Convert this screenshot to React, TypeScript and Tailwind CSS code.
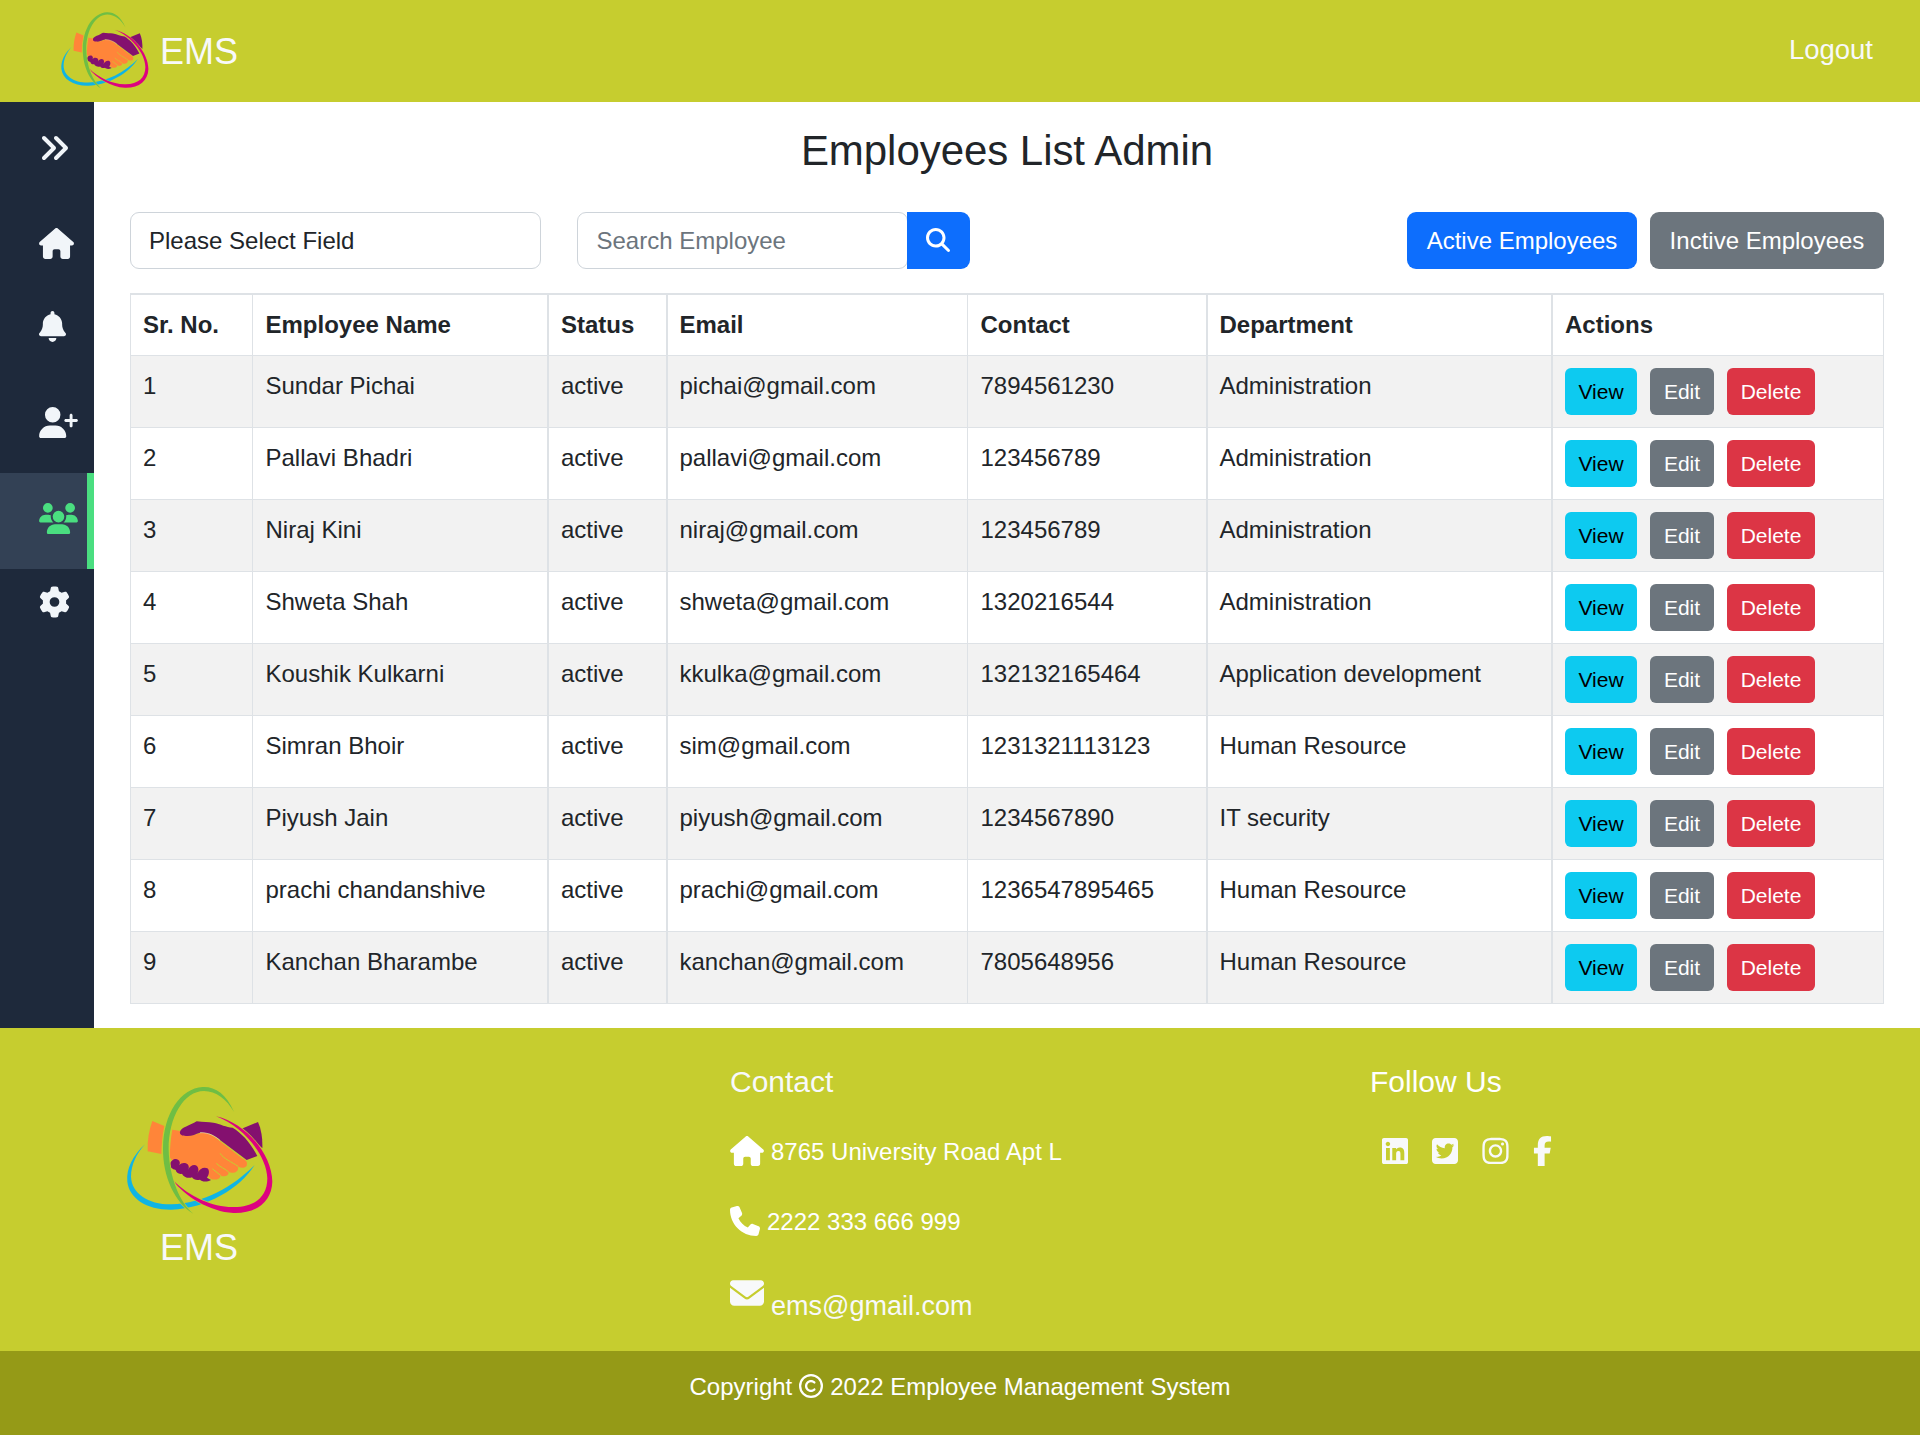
import React from "react";
import {
  FaAnglesRight,
  FaHouse,
  FaBell,
  FaUserPlus,
  FaUsers,
  FaGear,
  FaMagnifyingGlass,
  FaPhone,
  FaEnvelope,
  FaLinkedin,
  FaSquareTwitter,
  FaInstagram,
  FaFacebookF,
  FaRegCopyright,
} from "react-icons/fa6";

type Employee = {
  id: number;
  name: string;
  email: string;
  contact: string;
  department: string;
};

const employees: Employee[] = [
  { id: 1, name: "Sundar Pichai", email: "pichai@gmail.com", contact: "7894561230", department: "Administration" },
  { id: 2, name: "Pallavi Bhadri", email: "pallavi@gmail.com", contact: "123456789", department: "Administration" },
  { id: 3, name: "Niraj Kini", email: "niraj@gmail.com", contact: "123456789", department: "Administration" },
  { id: 4, name: "Shweta Shah", email: "shweta@gmail.com", contact: "1320216544", department: "Administration" },
  { id: 5, name: "Koushik Kulkarni", email: "kkulka@gmail.com", contact: "132132165464", department: "Application development" },
  { id: 6, name: "Simran Bhoir", email: "sim@gmail.com", contact: "1231321113123", department: "Human Resource" },
  { id: 7, name: "Piyush Jain", email: "piyush@gmail.com", contact: "1234567890", department: "IT security" },
  { id: 8, name: "prachi chandanshive", email: "prachi@gmail.com", contact: "1236547895465", department: "Human Resource" },
  { id: 9, name: "Kanchan Bharambe", email: "kanchan@gmail.com", contact: "7805648956", department: "Human Resource" },
];

const columns = [
  { label: "Sr. No.", cell: "w-[123px] border-l border-r pl-3" },
  { label: "Employee Name", cell: "w-[296px] border-r-2 pl-[12.5px]" },
  { label: "Status", cell: "w-[119px] border-r-2 pl-3" },
  { label: "Email", cell: "w-[300px] border-r pl-[11.5px]" },
  { label: "Contact", cell: "w-[240px] border-r-2 pl-[12.5px]" },
  { label: "Department", cell: "w-[345px] border-r-2 pl-[11.5px]" },
  { label: "Actions", cell: "w-[331px] border-r pl-3" },
];

function Logo({ className }: { className: string }) {
  return (
    <svg viewBox="75 75 450 390" className={className}>
      <path fill="#10b4e4" d="M135 253C100 285 78 325 82 365C88 415 140 450 215 449C320 445 420 385 464 315C400 380 310 430 215 433C145 434 95 400 93 350C93 315 110 280 135 253Z" />
      <path fill="#84106f" d="M425 206L474 186C485 210 488 240 487 265Z" />
      <path fill="#ff8539" d="M157 183L193 198C187 225 185 255 184 282L143 274C142 240 147 210 157 183Z" />
      <path fill="#ff8539" d="M217 209L242 213C248 227 262 231 276 226L308 218C330 220 345 230 358 242L425 294C440 301 443 308 440 317C434 325 424 324 414 320C417 335 403 341 386 337C386 348 374 351 362 347C360 358 345 361 333 357L322 345L215 300L209 291C210 262 212 235 217 209Z" />
      <path fill="#84106f" d="M240 215C243 203 270 196 290 184C310 186 325 186 340 188C362 192 378 202 398 203C425 220 450 245 472 288L440 300L360 240C345 228 325 216 300 218C285 222 275 230 258 228C245 228 238 224 240 215Z" />
      <path fill="none" stroke="#f6e9df" strokeWidth="1.5" d="M300 218C325 217 345 228 360 241" />
      <g fill="none" stroke="#c6cd2f" strokeWidth="3" strokeLinecap="round">
        <path d="M361 281C372 298 395 305 414 319" />
        <path d="M350 311C360 322 375 325 387 337" />
        <path d="M338 327L363 347" />
      </g>
      <path fill="#84106f" d="M210 313C212 300 226 294 234 299C240 303 241 309 238 315C244 307 257 307 263 313C268 319 267 325 265 329C270 315 284 312 291 318C297 325 296 334 292 341C298 325 313 320 322 325C330 331 327 345 321 353L333 360C320 367 305 365 300 359C290 362 281 359 276 352C266 356 250 352 246 341C238 344 228 338 227 330C217 328 210 322 210 313Z" />
      <path fill="#dd0280" stroke="#c6cd2f" strokeWidth="4" paintOrder="stroke" d="M348 169C440 190 516 285 517 365C515 425 470 461 400 459C330 455 255 410 218 360C270 412 340 442 400 441C465 442 502 410 502 355C500 285 430 200 348 169Z" />
      <path fill="#6fbe44" stroke="#c6cd2f" strokeWidth="4" paintOrder="stroke" d="M402 156C378 100 344 79 308 81C242 85 190 160 189 265C188 350 225 430 280 461C240 430 207 350 206 268C206 170 252 93 312 93C348 93 380 118 402 156Z" />
    </svg>
  );
}

function SideItem({ icon, className }: { icon: React.ReactNode; className: string }) {
  return <div className={`flex shrink-0 items-start pl-[39px] ${className}`}>{icon}</div>;
}

export default function App() {
  return (
    <div className="flex h-[1435px] w-[1920px] flex-col overflow-hidden bg-white font-['Liberation_Sans',Arial,sans-serif] text-2xl leading-9 text-[#212529]">
      <header className="flex h-[102px] shrink-0 items-start justify-between bg-[#c6cd2f] pr-[47px] pl-[60px] text-[#f8f9fa]">
        <div className="flex items-start">
          <Logo className="mt-[11px] h-[78px] w-[90px]" />
          <span className="mt-[25px] ml-[10px] text-4xl leading-[54px]">EMS</span>
        </div>
        <a className="mt-[30px] text-[27.5px] leading-10">Logout</a>
      </header>

      <div className="flex h-[926px] shrink-0">
        <aside className="flex w-[94px] shrink-0 flex-col bg-[#1e293b] text-[#f1f5f9]">
          <SideItem className="h-24 pt-[30px]" icon={<FaAnglesRight className="-ml-px h-8 w-8" />} />
          <SideItem className="h-[83px] pt-[30px]" icon={<FaHouse className="h-[31px] w-[35px]" />} />
          <SideItem className="h-24 pt-[30px]" icon={<FaBell className="h-[31px] w-[27px]" />} />
          <SideItem className="h-24 pt-[30px]" icon={<FaUserPlus className="h-[31px] w-[39px]" />} />
          <SideItem
            className="h-24 border-r-[7px] border-[#4ade80] bg-[#334155] pt-[30px] text-[#4ade80]"
            icon={<FaUsers className="h-[31px] w-[39px]" />}
          />
          <SideItem className="h-24 pt-[17px]" icon={<FaGear className="h-8 w-[31px]" />} />
        </aside>

        <main className="flex w-[1826px] flex-col px-9">
          <h1 className="mt-6 text-center text-[42px] leading-[50px] tracking-[-0.05px]">Employees List Admin</h1>

          <div className="mt-9 flex h-[57px] shrink-0 items-stretch">
            <select className="w-[411px] appearance-none rounded-[9px] border border-[#ced4da] bg-white pr-12 pl-[18px]">
              <option>Please Select Field</option>
            </select>
            <input
              placeholder="Search Employee"
              className="ml-9 w-[331px] rounded-[9px] border border-[#ced4da] bg-white pl-[18.5px] placeholder:text-[#6c757d]"
            />
            <button className="-ml-px flex w-[63px] items-center justify-center rounded-r-[9px] bg-[#0d6efd] pr-px pb-px text-white">
              <FaMagnifyingGlass className="h-6 w-6" />
            </button>
            <button className="ml-auto w-[230px] rounded-[9px] bg-[#0d6efd] text-white">Active Employees</button>
            <button className="ml-[13px] w-[234px] rounded-[9px] bg-[#6c757d] text-white">Inctive Employees</button>
          </div>

          <table className="mt-6 w-[1754px] table-fixed border-separate border-spacing-0 text-left">
            <thead>
              <tr className="h-[63px]">
                {columns.map((c) => (
                  <th key={c.label} className={`border-t-2 border-b border-[#dee2e6] py-0 pr-0 font-bold ${c.cell}`}>
                    {c.label}
                  </th>
                ))}
              </tr>
            </thead>
            <tbody>
              {employees.map((e) => (
                <tr key={e.id} className="h-[72px] odd:bg-[#f2f2f2]">
                  {[String(e.id), e.name, "active", e.email, e.contact, e.department].map((text, i) => (
                    <td key={i} className={`border-b border-[#dee2e6] pt-3 pr-0 pb-0 align-top ${columns[i].cell}`}>
                      {text}
                    </td>
                  ))}
                  <td className="border-r border-b border-[#dee2e6] pt-3 pr-0 pb-0 pl-3 align-top">
                    <div className="flex h-[47px] gap-[13px] text-[21px] leading-8 text-white">
                      <button className="w-[72px] rounded-md bg-[#0dcaf0] text-black">View</button>
                      <button className="w-16 rounded-md bg-[#6c757d]">Edit</button>
                      <button className="w-[88px] rounded-md bg-[#dc3545]">Delete</button>
                    </div>
                  </td>
                </tr>
              ))}
            </tbody>
          </table>
        </main>
      </div>

      <footer className="flex h-[323px] shrink-0 items-start bg-[#c6cd2f] text-[#f8f9fa]">
        <div className="flex w-[730px] flex-col pt-[57px] pl-[125px]">
          <Logo className="h-[130px] w-[150px]" />
          <span className="mt-[6px] ml-[35px] text-4xl leading-[54px]">EMS</span>
        </div>
        <div className="flex w-[640px] flex-col pt-9">
          <h2 className="text-3xl leading-9">Contact</h2>
          <div className="mt-9 flex h-[30px] items-center gap-[7px] text-white">
            <FaHouse className="h-[30px] w-[34px]" />
            <span className="pt-0.5">8765 University Road Apt L</span>
          </div>
          <div className="mt-10 flex h-[30px] items-center gap-[7px] text-white">
            <FaPhone className="h-[30px] w-[30px]" />
            <span className="pt-0.5">2222 333 666 999</span>
          </div>
          <div className="mt-10 flex items-start gap-[7px]">
            <FaEnvelope className="h-[34px] w-[34px]" />
            <span className="mt-[10px] text-[27px] leading-10">ems@gmail.com</span>
          </div>
        </div>
        <div className="flex flex-col pt-9 text-white">
          <h2 className="text-3xl leading-9">Follow Us</h2>
          <div className="mt-9 ml-3 flex items-center gap-6 text-[#f8f9fa]">
            <FaLinkedin className="h-[30px] w-[26px]" />
            <FaSquareTwitter className="h-[30px] w-[26px]" />
            <FaInstagram className="h-[30px] w-[27px]" />
            <FaFacebookF className="h-[30px] w-[19px]" />
          </div>
        </div>
      </footer>

      <div className="flex h-[84px] shrink-0 items-start justify-center gap-[7px] bg-[#959a17] pt-[18px] text-white">
        <span>Copyright</span>
        <FaRegCopyright className="mt-[5px] h-6 w-6" />
        <span>2022 Employee Management System</span>
      </div>
    </div>
  );
}
